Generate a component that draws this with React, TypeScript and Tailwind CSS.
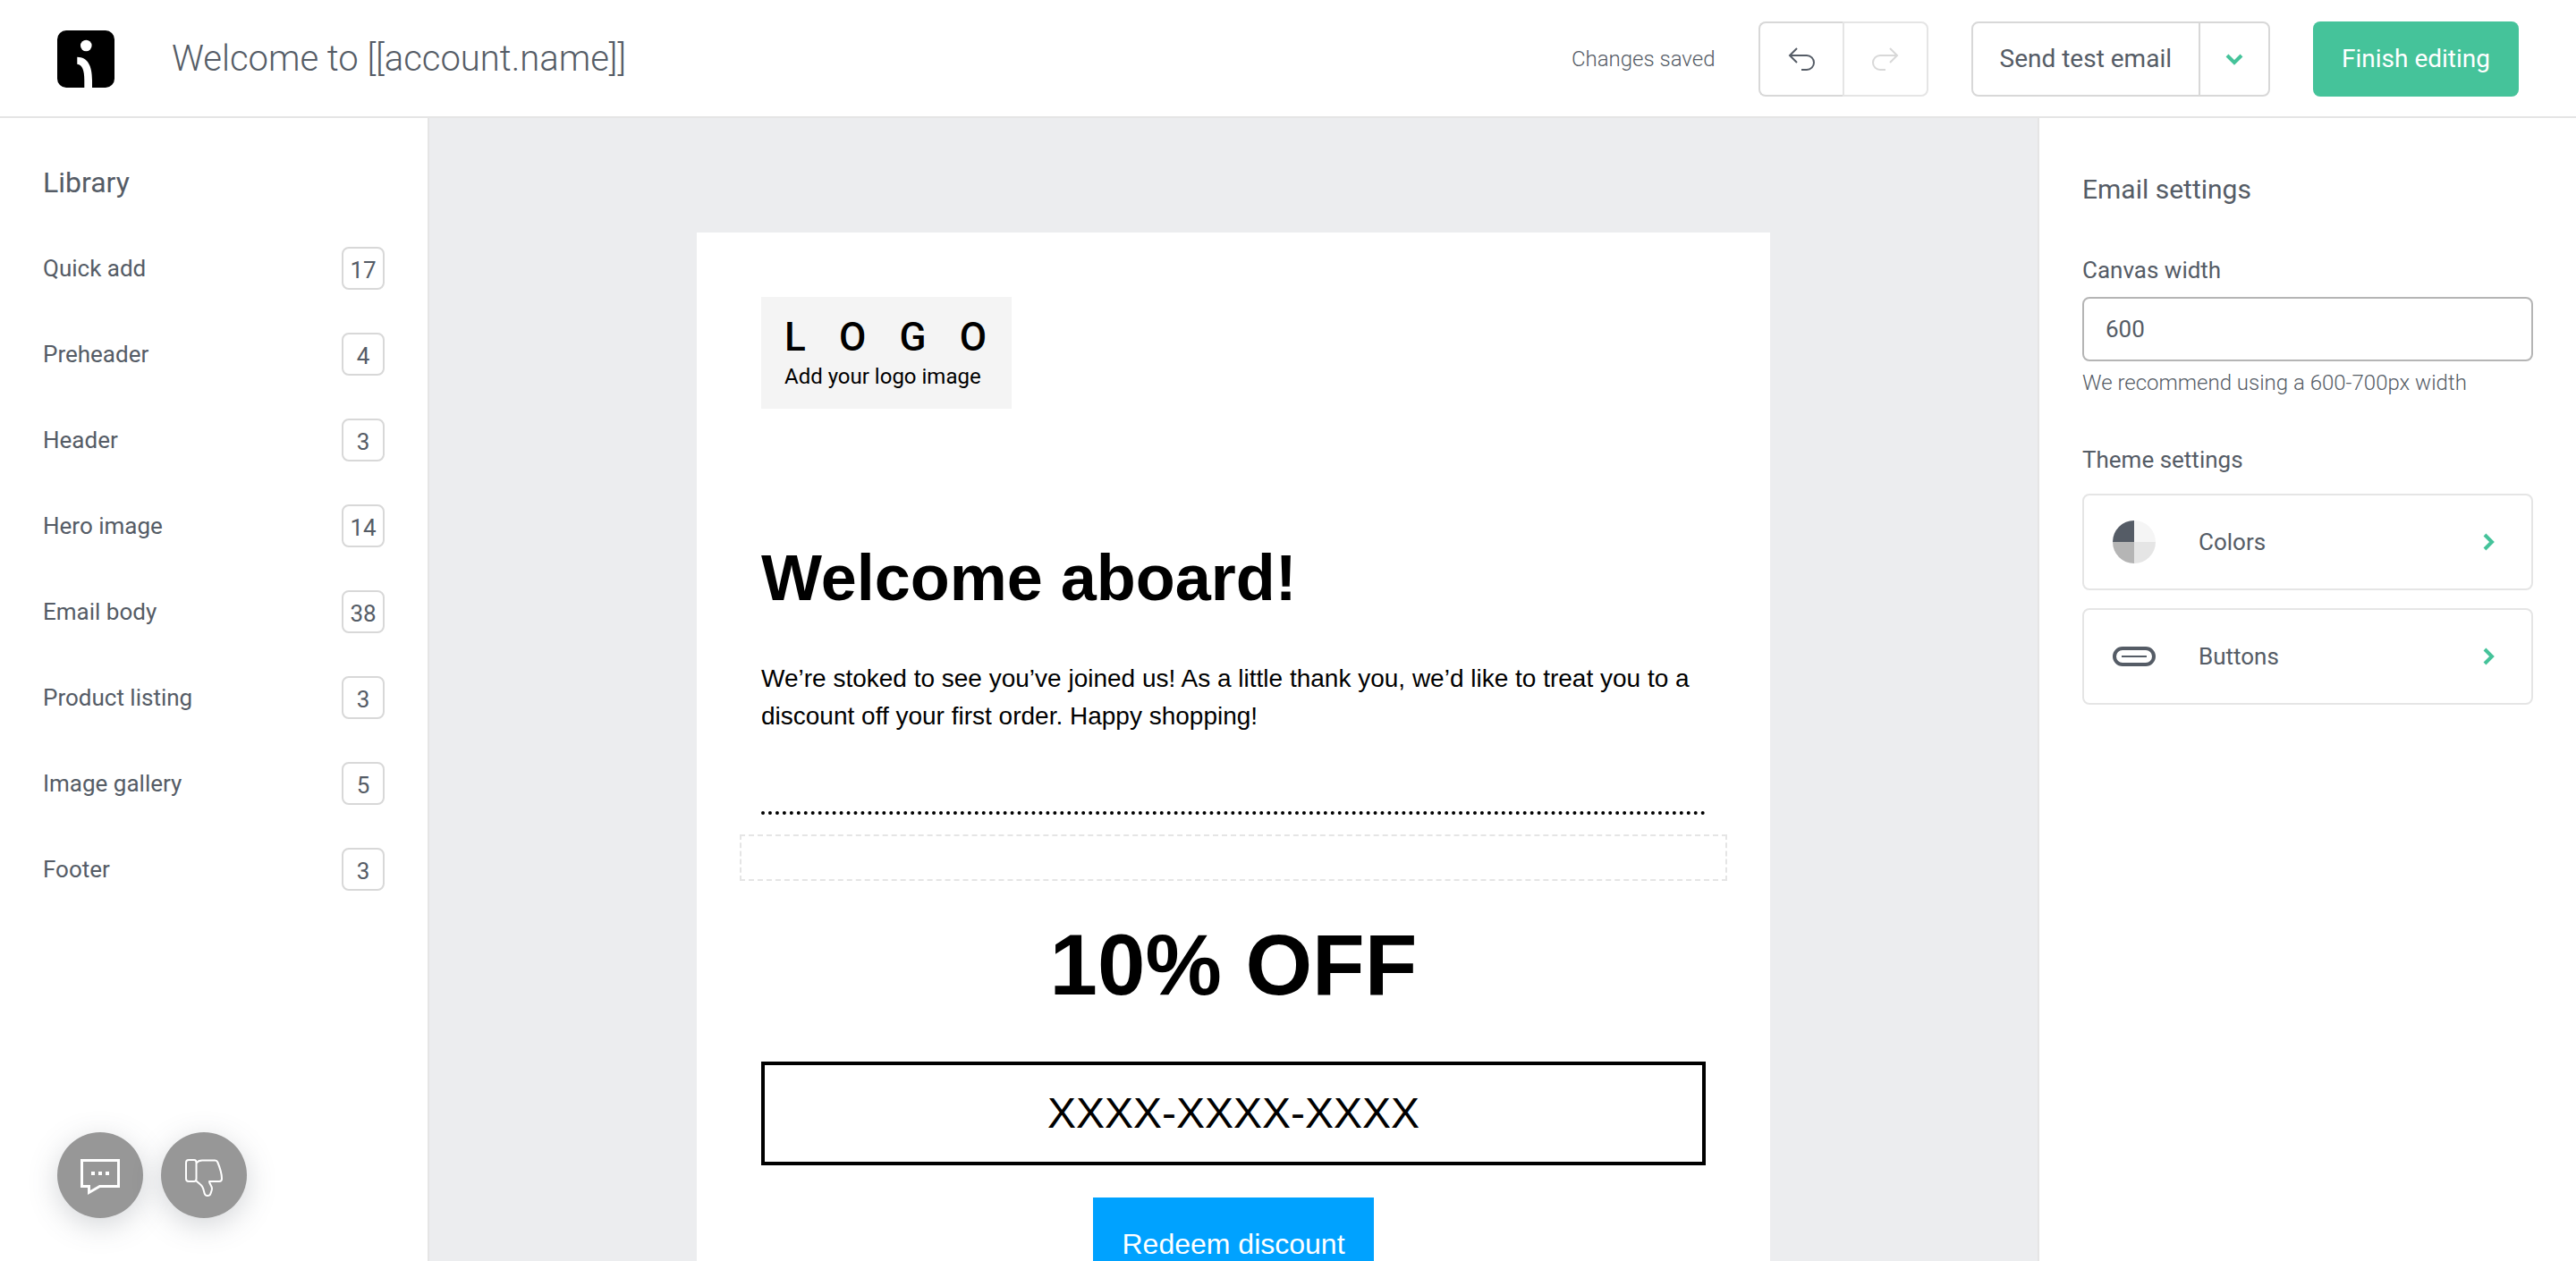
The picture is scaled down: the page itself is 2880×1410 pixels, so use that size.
import type { ReactNode } from "react";

const library: [string, number][] = [
  ["Quick add", 17],
  ["Preheader", 4],
  ["Header", 3],
  ["Hero image", 14],
  ["Email body", 38],
  ["Product listing", 3],
  ["Image gallery", 5],
  ["Footer", 3],
];

function BrandMark() {
  return (
    <svg className="size-16 shrink-0" viewBox="0 0 64 64" role="img" aria-label="Omnisend">
      <rect width="64" height="64" rx="10" fill="#000" />
      <circle cx="32.300" cy="17" r="6.300" fill="#fff" />
      <path d="M22.300 29.700C34 30 39 39 39 56v8h-8.700v-8C30.300 44 28 38.500 22.300 37.700z" fill="#fff" />
    </svg>
  );
}

function UndoIcon() {
  return (
    <svg className="h-8 w-8" viewBox="0 0 32 32" fill="none" stroke="currentColor" strokeWidth="2" aria-hidden="true">
      <path d="M11 4L3 12l8 8M3 12h19a8 8 0 0 1 0 16h-6" />
    </svg>
  );
}

function RedoIcon() {
  return (
    <svg className="h-8 w-8" viewBox="0 0 32 32" fill="none" stroke="currentColor" strokeWidth="2" aria-hidden="true">
      <path d="M21 4l8 8-8 8M29 12H10a8 8 0 0 0 0 16h6" />
    </svg>
  );
}

function ChevronDown() {
  return (
    <svg className="h-5 w-5" viewBox="0 0 20 20" fill="none" stroke="#45c39a" strokeWidth="4" aria-hidden="true">
      <path d="M2 6l8 8 8-8" />
    </svg>
  );
}

function ChevronRight() {
  return (
    <svg className="h-5 w-5" viewBox="0 0 20 20" fill="none" stroke="#45c39a" strokeWidth="4" aria-hidden="true">
      <path d="M6 2l8 8-8 8" />
    </svg>
  );
}

function ColorsIcon() {
  return (
    <svg className="size-12" viewBox="0 0 48 48" aria-hidden="true">
      <path d="M24 24V0A24 24 0 0 0 0 24z" fill="#555c66" />
      <path d="M24 24h24A24 24 0 0 0 24 0z" fill="#f5f5f5" />
      <path d="M24 24v24a24 24 0 0 0 24-24z" fill="#e5e5e5" />
      <path d="M24 24H0a24 24 0 0 0 24 24z" fill="#b5b5b5" />
    </svg>
  );
}

function ButtonsIcon() {
  return (
    <svg className="size-12" viewBox="0 0 48 48" fill="none" stroke="#555c66" aria-hidden="true">
      <rect x="2" y="15" width="44" height="18" rx="9" strokeWidth="4" />
      <path d="M10 24h28" strokeWidth="2" />
    </svg>
  );
}

function SettingsCard({ icon, label }: { icon: ReactNode; label: string }) {
  return (
    <button
      type="button"
      className="flex w-full items-center rounded-lg border-2 border-[#e5e5e5] px-8 py-7 text-left text-[26px]"
    >
      {icon}
      <span className="ml-12 flex-1">{label}</span>
      <span className="pr-1.5">
        <ChevronRight />
      </span>
    </button>
  );
}

function FloatingButton({ label, children }: { label: string; children: ReactNode }) {
  return (
    <button
      type="button"
      aria-label={label}
      className="flex size-24 items-center justify-center rounded-full bg-[#979797] shadow-[0_8px_32px_rgba(85,92,102,0.25)]"
    >
      {children}
    </button>
  );
}

export default function App() {
  return (
    <div className="flex h-screen flex-col overflow-hidden bg-white font-['Roboto',sans-serif] text-[#555c66]">
      <header className="flex shrink-0 items-center gap-12 border-b-2 border-[#e5e5e5] px-16 pt-6 pb-[22px]">
        <BrandMark />
        <h1 className="ml-4 flex-1 text-[40px] font-light">Welcome to [[account.name]]</h1>
        <p className="text-2xl font-light">Changes saved</p>
        <div className="flex h-[84px]">
          <button
            type="button"
            aria-label="Undo"
            className="flex w-[94px] items-center justify-center rounded-l-lg border-2 border-r-0 border-[#d8d8d8]"
          >
            <UndoIcon />
          </button>
          <button
            type="button"
            disabled
            aria-label="Redo"
            className="flex w-24 items-center justify-center rounded-r-lg border-2 border-[#e5e5e5] text-[#d8d8d8]"
          >
            <RedoIcon />
          </button>
        </div>
        <div className="flex h-[84px] rounded-lg border-2 border-[#d8d8d8]">
          <button type="button" className="px-[30px] text-[28px]">
            Send test email
          </button>
          <button
            type="button"
            aria-label="More test options"
            className="flex w-[78px] items-center justify-center border-l-2 border-[#d8d8d8]"
          >
            <ChevronDown />
          </button>
        </div>
        <button type="button" className="h-[84px] rounded-lg bg-[#45c39a] px-8 text-[28px] text-white">
          Finish editing
        </button>
      </header>

      <div className="flex min-h-0 flex-1">
        <aside className="flex w-[480px] shrink-0 flex-col border-r-2 border-[#e5e5e5] px-12 pt-12">
          <h2 className="text-[32px] leading-[48px]">Library</h2>
          <ul className="mt-6 flex flex-1 flex-col">
            {library.map(([name, count]) => (
              <li key={name}>
                <button type="button" className="flex h-24 w-full items-center justify-between text-[26px]">
                  <span>{name}</span>
                  <span className="flex size-12 items-center justify-center rounded-lg border-2 border-[#d8d8d8] pt-1">
                    {count}
                  </span>
                </button>
              </li>
            ))}
          </ul>
          <div className="mb-12 ml-4 flex gap-5">
            <FloatingButton label="Chat">
              <svg className="size-12" viewBox="0 0 48 48" fill="none" stroke="#fff" strokeWidth="3" aria-hidden="true">
                <path d="M3.500 7.500h41v29H23.500L11.500 43.500v-7h-8z" />
                <path d="M14 22h4M22 22h4M30 22h4" strokeWidth="4" />
              </svg>
            </FloatingButton>
            <FloatingButton label="Dislike">
              <svg
                className="size-12"
                viewBox="0 0 48 48"
                fill="none"
                stroke="#fff"
                strokeWidth="2"
                strokeLinejoin="round"
                aria-hidden="true"
              >
                <path d="M7 7h6q2.500 0 2.500 3v18q0 3-2.500 3H7q-3 0-3-3V10q0-3 3-3z" />
                <path d="M15.500 10.500C17 8.500 19 7.500 22 7.500h14.500c1.500 0 2.300.8 2.800 2C42 16 44 22 44 28c0 2-1.200 3-3 3H30c0 3 3 4.500 3 8 0 2-1 4-1.700 6-.5 1.500-1.800 2-3.300 2s-2.700-.6-3.200-2.200C24 42.500 23.600 39.500 22.500 37.500 21 34.500 18 33 15.500 30.500" />
              </svg>
            </FloatingButton>
          </div>
        </aside>

        <main className="flex min-w-0 flex-1 justify-center overflow-hidden bg-[#ecedef] pt-32">
          <article className="w-full max-w-[1200px] bg-white px-[72px] pt-[72px] font-['Liberation_Sans',Arial,sans-serif] text-black">
            <div className="flex h-[125px] w-[280px] flex-col justify-center bg-[#f4f4f4] pr-7 pl-[26px] font-['Roboto',sans-serif]">
              <div className="flex justify-between text-[44px] leading-[48px] font-medium">
                <span>L</span>
                <span>O</span>
                <span>G</span>
                <span>O</span>
              </div>
              <p className="mt-1 text-2xl">Add your logo image</p>
            </div>
            <h2 className="mt-[145px] text-7xl leading-[88px] font-bold">Welcome aboard!</h2>
            <p className="mt-12 text-[28px] leading-[42px]">
              We’re stoked to see you’ve joined us! As a little thank you, we’d like to treat you to a discount off your
              first order. Happy shopping!
            </p>
            <hr className="mt-[85px] border-t-4 border-dotted border-black" />
            <div className="-mx-6 mt-[22px] h-[52px] border-2 border-dashed border-[#e5e5e5]" />
            <p className="mt-[38px] text-center text-8xl leading-[112px] font-bold">10% OFF</p>
            <p className="mt-[52px] flex h-[116px] items-center justify-center border-4 border-black text-5xl">
              XXXX-XXXX-XXXX
            </p>
            <div className="mt-9 flex justify-center">
              <a href="#redeem" className="bg-[#00a2ff] px-8 py-[30px] text-[32px] leading-[44px] text-white">
                Redeem discount
              </a>
            </div>
          </article>
        </main>

        <aside className="w-[602px] shrink-0 border-l-2 border-[#e5e5e5] px-12 pt-14">
          <h2 className="text-[30px] leading-[48px]">Email settings</h2>
          <label htmlFor="canvas-width" className="mt-[46px] block text-[26px] leading-10">
            Canvas width
          </label>
          <input
            id="canvas-width"
            type="text"
            defaultValue="600"
            className="mt-2.5 block h-[72px] w-full rounded-lg border-2 border-[#b5b5b5] px-6 text-[26px]"
          />
          <p className="mt-2 text-2xl leading-8 font-light">We recommend using a 600-700px width</p>
          <h3 className="mt-[50px] text-[26px] leading-10">Theme settings</h3>
          <div className="mt-[18px] flex flex-col gap-5">
            <SettingsCard icon={<ColorsIcon />} label="Colors" />
            <SettingsCard icon={<ButtonsIcon />} label="Buttons" />
          </div>
        </aside>
      </div>
    </div>
  );
}
